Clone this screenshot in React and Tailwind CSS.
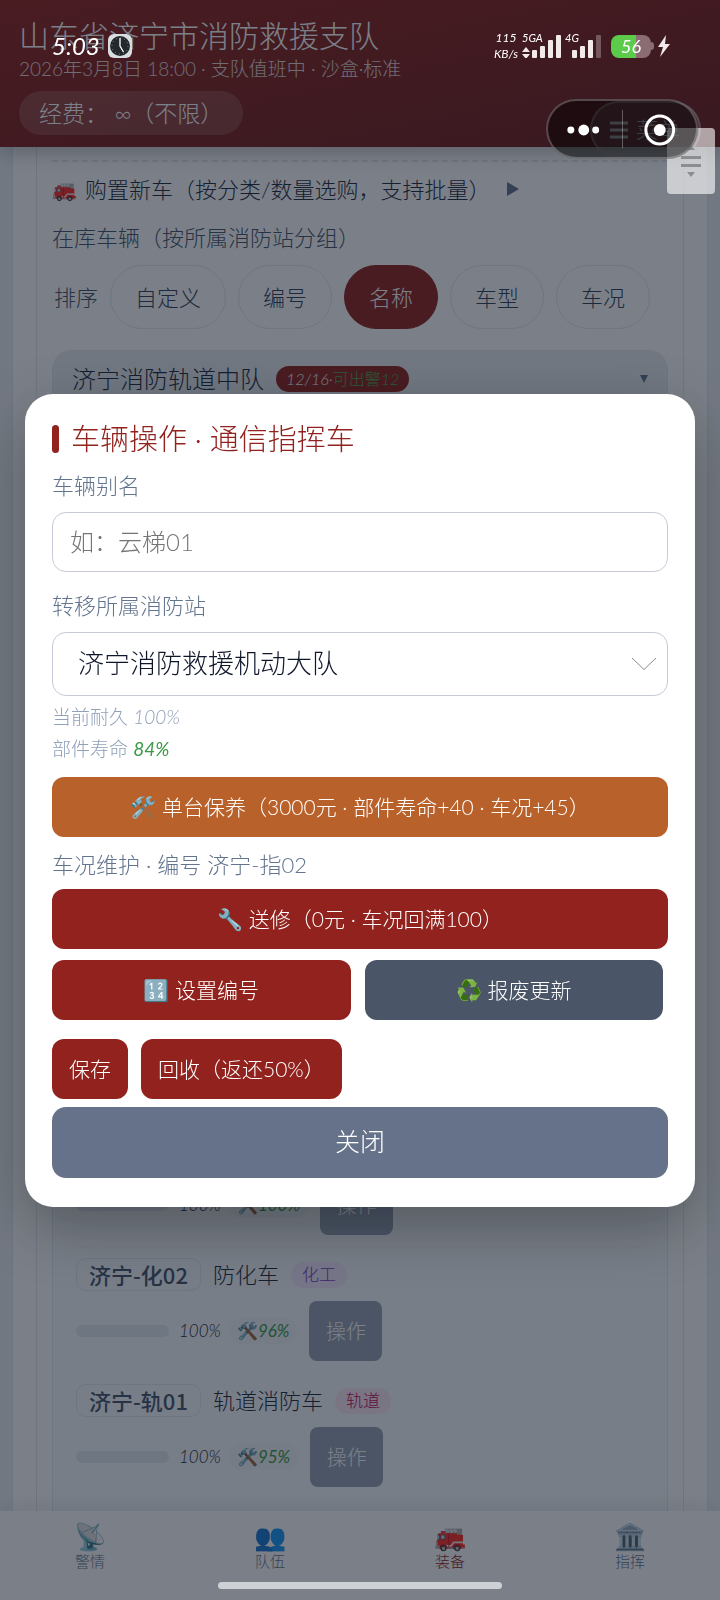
import { useState } from 'react';

const SORTS = ['自定义', '编号', '名称', '车型', '车况'];

const VEHICLES = [
  { id: 1, condition: '100%', parts: '100%' },
  {
    id: 2,
    plate: '济宁-化02',
    name: '防化车',
    tag: '化工',
    tagClass: 'bg-purple-100 text-[#7641ba]',
    condition: '100%',
    parts: '96%',
  },
  {
    id: 3,
    plate: '济宁-轨01',
    name: '轨道消防车',
    tag: '轨道',
    tagClass: 'bg-pink-100 text-pink-700',
    condition: '100%',
    parts: '95%',
  },
];

const TABS = [
  { icon: '📡', label: '警情' },
  { icon: '👥', label: '队伍' },
  { icon: '🚒', label: '装备', active: true },
  { icon: '🏛️', label: '指挥' },
];

function Header() {
  return (
    <header className="relative z-10 flex flex-col items-start bg-gradient-to-br from-[#91231d] to-[#6d1a1a] px-[19px] pt-[17px] pb-3 text-white shadow-[0_4px_20px_rgba(0,0,0,0.3)]">
      <h1 className="text-[30px] leading-9">山东省济宁市消防救援支队</h1>
      <p className="mt-0.5 text-[19px] leading-7 opacity-80">2026年3月8日 18:00 · 支队值班中 · 沙盒·标准</p>
      <div className="mt-2 flex h-11 items-center rounded-full bg-white/15 px-5 text-[23px]">经费： ∞（不限）</div>
      <button className="absolute right-[19px] bottom-[-11px] flex h-[57px] w-[111px] items-center gap-2 rounded-full border-2 border-white/40 bg-white/15 pl-[18px] text-[22px]">
        <svg viewBox="0 0 18 18" className="h-[18px] w-[18px]" stroke="currentColor" strokeWidth="3">
          <path d="M0 2h18M0 9h18M0 16h18" />
        </svg>
        菜单
      </button>
    </header>
  );
}

function VehicleRow({ v }) {
  return (
    <li className="border-t border-slate-100 pt-2.5 pb-3">
      {v.plate && (
        <div className="mb-2.5 flex h-[33px] items-center">
          <span className="flex h-full items-center rounded-[10px] border border-slate-200 px-3 font-['Noto_Sans_CJK_SC',sans-serif] text-[22px] font-medium text-slate-600">
            {v.plate}
          </span>
          <span className="ml-3 text-[22px] text-slate-800">{v.name}</span>
          <span className={`ml-3 rounded-full px-[11px] text-[17px] leading-[26px] ${v.tagClass}`}>{v.tag}</span>
        </div>
      )}
      <div className="flex h-[60px] items-center">
        <span className="h-3 w-[93px] rounded-full bg-slate-200" />
        <span className="ml-2.5 text-[17px] text-slate-800 italic">{v.condition}</span>
        <span className="ml-2 flex items-center rounded-full bg-slate-100 px-2 text-[17px] font-normal text-[#3a9a45] italic">
          <span className="not-italic">🛠️</span>
          {v.parts}
        </span>
        <button className="ml-3 h-full w-[73px] rounded-lg bg-[#95a1b3] text-[20px] text-white">操作</button>
      </div>
    </li>
  );
}

function Garage() {
  const [sort, setSort] = useState('名称');

  return (
    <main className="mx-3 flex min-h-0 flex-1 flex-col border-x border-slate-200 bg-white px-[23px]">
      <div className="flex flex-1 flex-col border-x border-slate-200 px-[15px] pt-[13px]">
        <div className="flex h-11 items-center border-t-2 border-dashed border-slate-200 pt-3 text-[22px] text-slate-800">
          <span className="mr-2 text-[20px]">🚒</span>
          购置新车（按分类/数量选购，支持批量）
          <svg viewBox="0 0 12 14" className="ml-4 h-3.5 w-3 fill-slate-500">
            <path d="M0 0l12 7-12 7z" />
          </svg>
        </div>
        <p className="mt-[18px] text-[22px] leading-8 text-slate-600">在库车辆（按所属消防站分组）</p>
        <div className="mt-[11px] flex items-center gap-3 text-[22px]">
          <span className="ml-0.5 text-slate-600">排序</span>
          {SORTS.map((s) => (
            <button
              key={s}
              onClick={() => setSort(s)}
              className={`h-16 rounded-full border px-6 ${
                s === sort ? 'border-[#91221d] bg-[#91221d] text-white' : 'border-slate-200 text-slate-700'
              }`}
            >
              {s}
            </button>
          ))}
        </div>

        <section className="mt-[21px] flex flex-1 flex-col rounded-t-[20px] border border-b-0 border-slate-200 bg-slate-50">
          <div className="flex h-14 items-center rounded-t-[19px] bg-[#e8edf0] px-[19px] text-[24px] text-slate-800">
            济宁消防轨道中队
            <span className="ml-3 rounded-full bg-[#91221d] px-2.5 text-[16px] leading-[26px] text-white">
              <i>12/16</i>·<span className="text-[#4caf50]">可出警<i>12</i></span>
            </span>
            <svg viewBox="0 0 8 8" className="ml-auto h-2 w-2 fill-slate-500">
              <path d="M0 0h8l-4 8z" />
            </svg>
          </div>
          <ul className="mt-auto px-[23px] pb-3">
            {VEHICLES.map((v) => (
              <VehicleRow key={v.id} v={v} />
            ))}
          </ul>
        </section>
      </div>
    </main>
  );
}

function TabBar() {
  return (
    <nav className="flex h-[89px] items-start justify-around bg-white pt-2.5 shadow-[0_-4px_20px_rgba(0,0,0,0.08)]">
      {TABS.map((t) => (
        <a key={t.label} href="#" className={`flex flex-1 flex-col items-center ${t.active ? 'text-[#91221d]' : 'text-slate-500'}`}>
          <span className="text-[26px] leading-[31px]">{t.icon}</span>
          <span className="text-[15px] leading-[18px]">{t.label}</span>
        </a>
      ))}
    </nav>
  );
}

function VehicleModal() {
  return (
    <div className="fixed inset-0 z-20 flex items-center bg-[#0f1726]/55 px-[25px]">
      <div role="dialog" className="w-full rounded-[28px] bg-white px-[27px] pt-[26px] pb-[29px] shadow-[0_20px_60px_rgba(0,0,0,0.3)]">
        <h2 className="flex h-[38px] items-center gap-3 text-[29px] text-[#91221d]">
          <span className="h-7 w-[7px] rounded-full bg-[#91221d]" />
          车辆操作 · 通信指挥车
        </h2>
        <label htmlFor="alias" className="mt-3 block text-[22px] leading-8 text-slate-500">
          车辆别名
        </label>
        <input
          id="alias"
          placeholder="如：云梯01"
          className="mt-[10px] block h-[60px] w-full rounded-[14px] border border-[#c6cad8] px-[17px] text-[24px] placeholder:text-[#757575]"
        />
        <label htmlFor="station" className="mt-[18px] block text-[22px] leading-8 text-slate-500">
          转移所属消防站
        </label>
        <div className="relative mt-[10px]">
          <select
            id="station"
            className="block h-16 w-full appearance-none rounded-[14px] border border-[#c6cad8] bg-white px-[25px] text-[26px] text-slate-900"
          >
            <option>济宁消防救援机动大队</option>
          </select>
          <svg viewBox="0 0 24 12" className="pointer-events-none absolute top-[26px] right-3 h-3 w-6" fill="none" stroke="#8a8a8a">
            <path d="M0 0l12 11.500L24 0" />
          </svg>
        </div>
        <p className="mt-[5px] text-[19px] leading-8 text-slate-400">
          当前耐久 <i>100%</i>
          <br />
          部件寿命 <i className="font-normal text-[#3a9a45]">84%</i>
        </p>
        <button className="mt-3 h-[60px] w-full rounded-xl bg-[#b9612a] text-[21px] text-white">
          🛠️ 单台保养（3000元 · 部件寿命+40 · 车况+45）
        </button>
        <p className="mt-3 text-[22px] leading-8 text-slate-500">车况维护 · 编号 济宁-指02</p>
        <button className="mt-2 h-[60px] w-full rounded-xl bg-[#91221d] text-[21px] text-white">
          🔧 送修（0元 · 车况回满100）
        </button>
        <div className="mt-[11px] mr-[5px] grid grid-cols-2 gap-[14px] text-[21px] text-white">
          <button className="h-[60px] rounded-xl bg-[#91221d]">🔢 设置编号</button>
          <button className="h-[60px] rounded-xl bg-[#4a5567]">♻️ 报废更新</button>
        </div>
        <div className="mt-[19px] flex gap-[13px] text-[21px] text-white">
          <button className="h-[60px] rounded-xl bg-[#91221d] px-[17px]">保存</button>
          <button className="h-[60px] rounded-xl bg-[#91221d] px-[17px]">回收（返还50%）</button>
        </div>
        <button className="mt-2 h-[71px] w-full rounded-[14px] bg-[#667289] text-[25px] text-white">关闭</button>
      </div>
    </div>
  );
}

function StatusBar() {
  return (
    <div className="pointer-events-none absolute inset-x-0 top-8 z-30 flex h-7 items-center justify-between pr-[50px] pl-[52px] text-white">
      <div className="flex items-center gap-2">
        <span className="text-[24px] font-normal italic">5:03</span>
        <svg viewBox="0 0 24 24" className="h-6 w-6">
          <rect width="24" height="24" rx="6" fill="#d9dde0" />
          <circle cx="12" cy="12" r="10" fill="#22282b" />
          <circle cx="12" cy="12" r="8" fill="none" stroke="#8a9094" strokeDasharray="1 3.190" />
          <path d="M12 4v8l3.500 6" fill="none" stroke="#fff" strokeWidth="1.300" />
        </svg>
      </div>
      <div className="flex items-center text-[12px] leading-4 font-normal italic">
        <div className="flex flex-col items-center">
          <span>115</span>
          <span>KB/s</span>
        </div>
        <div className="relative ml-1 h-6 w-[80px]">
          <svg viewBox="0 0 80 24" className="absolute inset-0 h-6 w-[80px]" fill="#f2e9ea">
            <path d="M0 18l4-5 4 5zM0 20l4 5 4-5z" />
            <rect x="10" y="16" width="5" height="8" rx="1" />
            <rect x="18" y="12" width="5" height="12" rx="1" />
            <rect x="26" y="6" width="5" height="18" rx="1" />
            <rect x="34" y="1" width="5" height="23" rx="1" />
          </svg>
          <span className="absolute -top-1 left-0 text-[11px]">5GA</span>
          <svg viewBox="0 0 30 24" className="absolute top-0 left-[50px] h-6 w-[30px]" fill="#f2e9ea">
            <rect x="0" y="16" width="5" height="8" rx="1" />
            <rect x="8" y="12" width="5" height="12" rx="1" />
            <rect x="16" y="6" width="5" height="18" rx="1" />
            <rect x="24" y="1" width="5" height="23" rx="1" opacity="0.300" />
          </svg>
          <span className="absolute -top-1 left-[43px] text-[11px]">4G</span>
        </div>
        <div className="ml-[9px] flex items-center">
          <span className="flex h-[23px] w-10 items-center justify-center rounded-lg bg-[linear-gradient(90deg,#5ccb4b_62%,#8a6c72_62%)] text-[18px]">
            56
          </span>
          <span className="h-2 w-[3px] rounded-r bg-[#8a6c72]" />
        </div>
        <svg viewBox="0 0 12 22" className="ml-1 h-[22px] w-3" fill="#f2e9ea">
          <path d="M8 0L0 12h5l-3 10 10-13H7z" />
        </svg>
      </div>
    </div>
  );
}

function Capsule() {
  return (
    <>
      <div className="absolute top-[128px] right-[5px] z-30 flex h-[66px] w-12 justify-center rounded-sm bg-white/60">
        <svg viewBox="0 0 48 66" className="h-full w-full" fill="#8b8d90">
          <path d="M20 22l4-5 4 5zM14 28h20v3H14zM14 36h20v3H14zM20 44h8l-4 5z" />
        </svg>
      </div>
      <div className="absolute top-[99px] right-[22px] z-30 flex h-[60px] w-[152px] rounded-full border-2 border-white/25 bg-black/50">
        <button aria-label="more" className="flex-1">
          <svg viewBox="0 0 74 56" className="h-full w-full" fill="#fff">
            <circle cx="23" cy="29" r="3.500" />
            <circle cx="36" cy="29" r="5.500" />
            <circle cx="48" cy="29" r="3.500" />
          </svg>
        </button>
        <span className="my-auto h-[38px] w-px bg-white/30" />
        <button aria-label="close" className="flex-1">
          <svg viewBox="0 0 74 56" className="h-full w-full">
            <circle cx="37" cy="29" r="14" fill="none" stroke="#fff" strokeWidth="3" />
            <circle cx="37" cy="29" r="6" fill="#fff" />
          </svg>
        </button>
      </div>
    </>
  );
}

export default function App() {
  return (
    <div className="relative flex h-screen flex-col overflow-hidden bg-[#eceef1] font-['Lato','Noto_Sans_CJK_SC',sans-serif] font-light">
      <Header />
      <Garage />
      <TabBar />
      <VehicleModal />
      <StatusBar />
      <Capsule />
      <div className="absolute bottom-[11px] left-1/2 z-30 h-[7px] w-[284px] -translate-x-1/2 rounded-full bg-[#cdd1d5]" />
    </div>
  );
}
